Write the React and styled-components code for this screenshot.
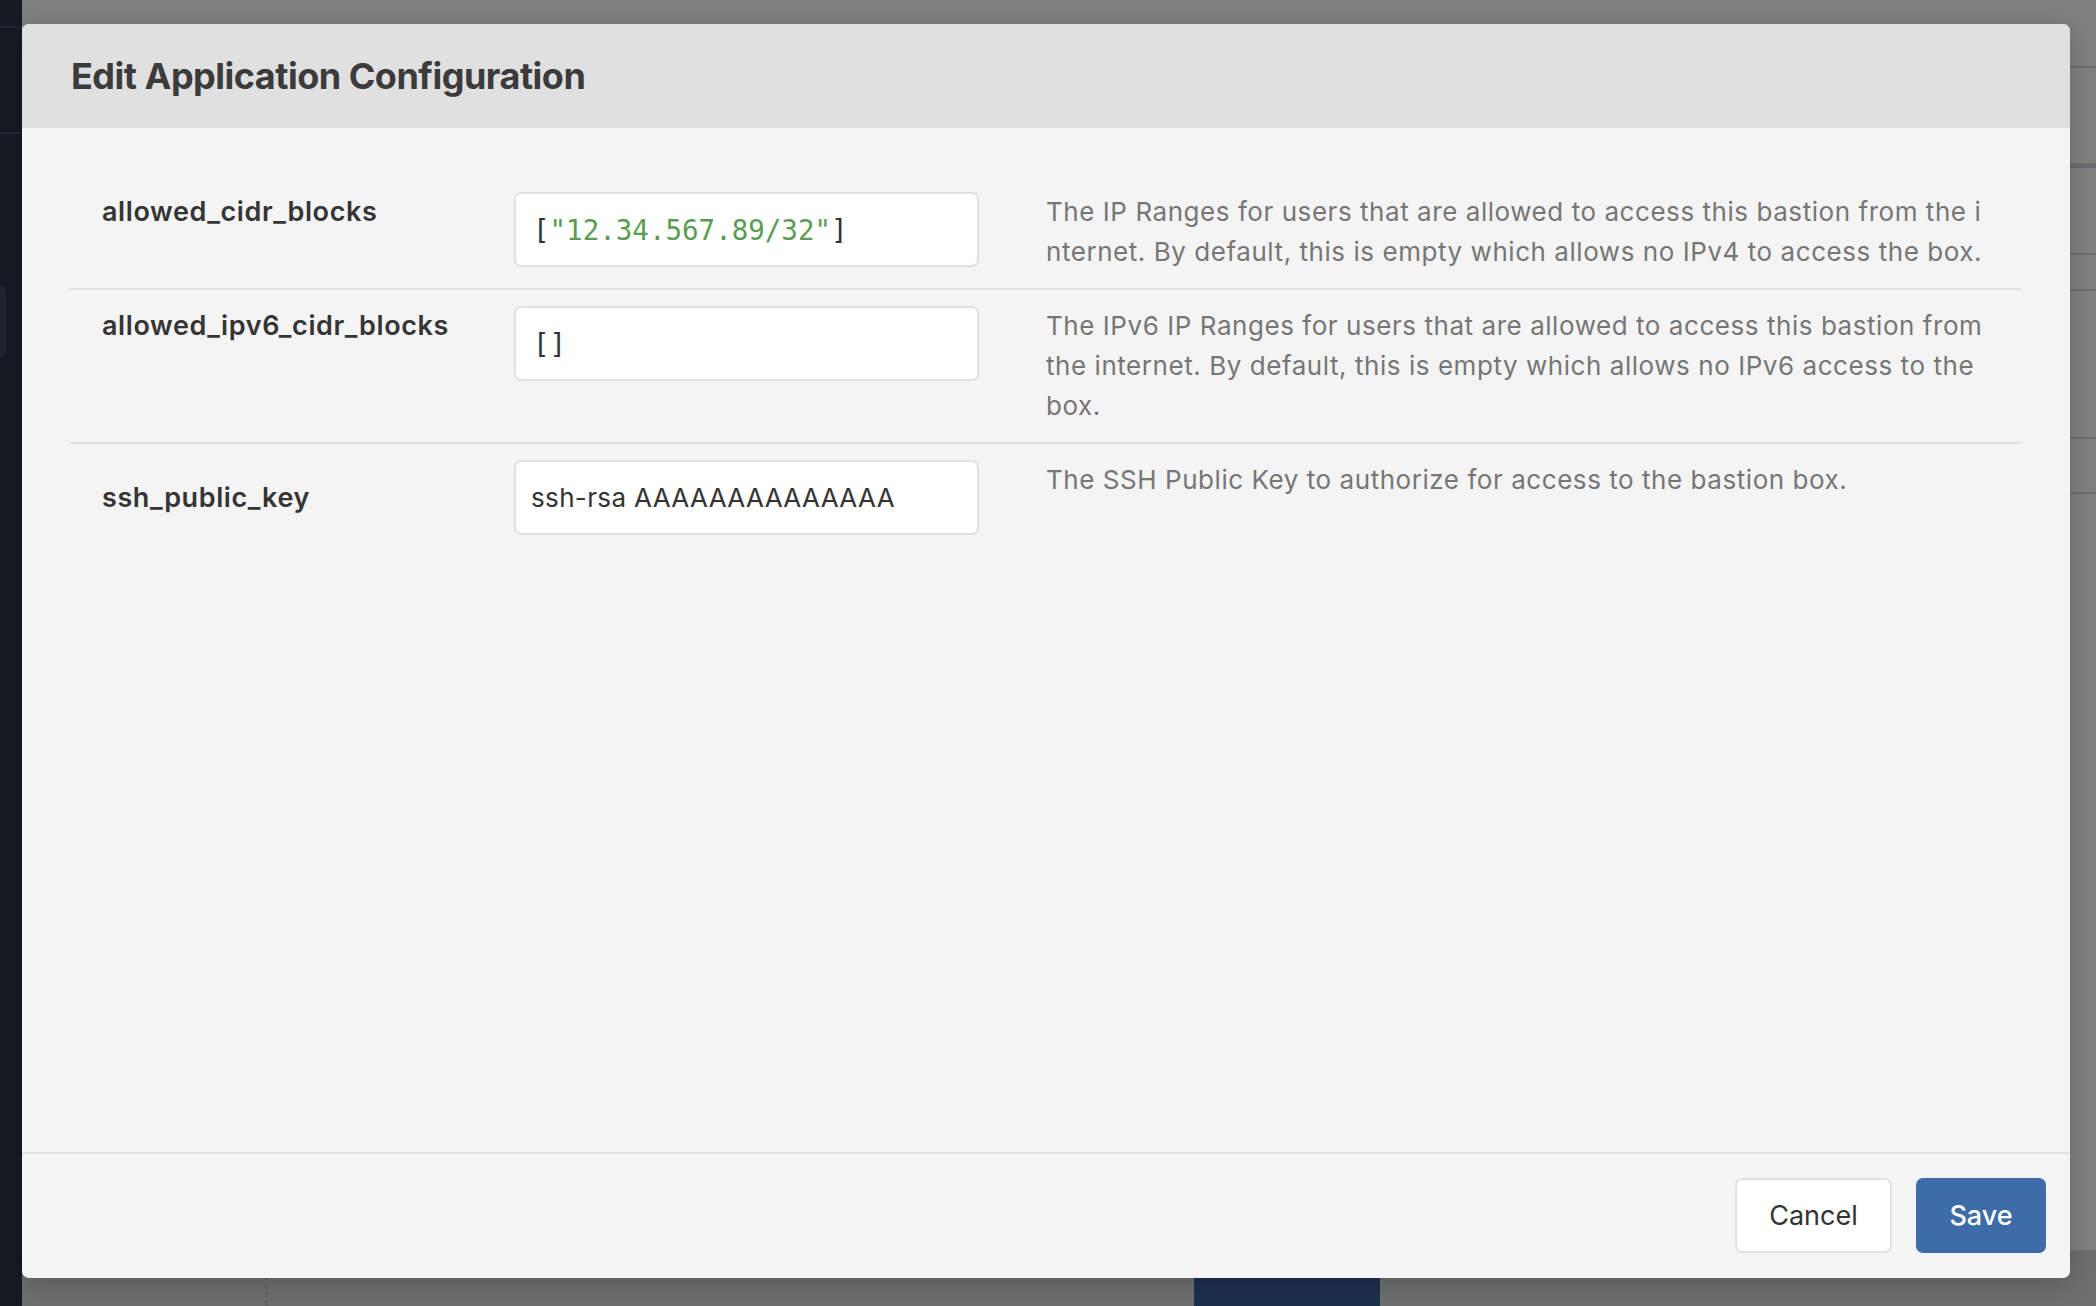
import React from "react";
import styled, { createGlobalStyle } from "styled-components";

const GlobalStyle = createGlobalStyle`
  html, body {
    margin: 0;
    padding: 0;
  }
  body {
    font-family: Inter, "Noto Sans", sans-serif;
    -webkit-font-smoothing: antialiased;
  }
`;

const Page = styled.div`
  display: flex;
  width: 2096px;
  height: 1306px;
  overflow: hidden;
`;

const Sidebar = styled.aside`
  width: 22px;
  flex-shrink: 0;
  background: #151a23;
  display: flex;
  flex-direction: column;
`;

const SideBlock = styled.div`
  height: ${(p) => p.h}px;
  border-bottom: ${(p) => (p.line ? "2px solid #222833" : "none")};
`;

const SideItem = styled.div`
  height: 72px;
  width: 6px;
  border-radius: 0 8px 8px 0;
  background: #1f2530;
`;

const Main = styled.main`
  position: relative;
  flex: 1;
  display: flex;
  flex-direction: column;
  background: #ffffff;
`;

const Band = styled.div`
  height: ${(p) => p.h}px;
  flex-shrink: 0;
  border-bottom: ${(p) => p.border || "2px solid #dcdcdc"};
`;

const Spacer = styled.div`
  flex: 1;
`;

const BottomBar = styled.div`
  height: 56px;
  display: flex;
  background: #dcdcdc;
  padding-top: 17px;
  box-sizing: border-box;
`;

const Dashed = styled.div`
  width: 243px;
  border-right: 3px dashed #c8c8c8;
  margin-top: -17px;
`;

const NavyButton = styled.div`
  margin-left: 926px;
  width: 186px;
  height: 60px;
  border-radius: 12px;
  background: #385e9a;
`;

const Overlay = styled.div`
  position: absolute;
  inset: 0;
  background: rgba(0, 0, 0, 0.5);
  display: flex;
  padding: 24px 26px 28px 0;
`;

const Modal = styled.div`
  flex: 1;
  display: flex;
  flex-direction: column;
  background: #f4f4f4;
  border-radius: 7px;
  overflow: hidden;
  box-shadow: 0 6px 24px rgba(0, 0, 0, 0.18);
`;

const Header = styled.header`
  height: 104px;
  flex-shrink: 0;
  display: flex;
  align-items: center;
  padding-left: 49px;
  background: #e0e0e0;
`;

const Title = styled.h2`
  margin: 0;
  font-size: 36px;
  font-weight: 700;
  color: #3b3b3b;
  letter-spacing: -0.5px;
`;

const Body = styled.div`
  flex: 1;
  padding: 48px 49px 0 48px;
`;

const Row = styled.div`
  display: grid;
  grid-template-columns: 412px 465px 1fr;
  padding: 16px 32px;
  border-bottom: ${(p) => (p.last ? "none" : "2px solid #e1e1e1")};
`;

const Label = styled.div`
  align-self: ${(p) => (p.centered ? "center" : "start")};
  font-size: 27px;
  line-height: 40px;
  font-weight: 600;
  letter-spacing: 0.6px;
  color: #353535;
`;

const Input = styled.div`
  height: 75px;
  box-sizing: border-box;
  display: flex;
  align-items: center;
  padding: 0 15px;
  background: #ffffff;
  border: 2px solid #e1e1e1;
  border-radius: 7px;
  font-size: 26px;
  letter-spacing: 0.35px;
  color: #333333;
  font-family: inherit;
`;

const Code = styled.span`
  font-family: "DejaVu Sans Mono", "Liberation Mono", monospace;
  font-size: 27.5px;
  letter-spacing: 0;
  padding-left: 2px;
`;

const Str = styled.span`
  color: #5b9c54;
`;

const Description = styled.div`
  padding-left: 67px;
  font-size: 26px;
  line-height: 40px;
  letter-spacing: 0.55px;
  color: #767676;
`;

const Line = styled.span`
  display: block;
  white-space: nowrap;
`;

const Footer = styled.footer`
  display: flex;
  justify-content: flex-end;
  gap: 24px;
  padding: 24px 24px 25px;
  border-top: 2px solid #e1e1e1;
`;

const Button = styled.button`
  height: 75px;
  width: ${(p) => p.w}px;
  box-sizing: border-box;
  border-radius: 7px;
  font-family: inherit;
  font-size: 27px;
  font-weight: ${(p) => (p.primary ? 500 : 400)};
  cursor: pointer;
  color: ${(p) => (p.primary ? "#ffffff" : "#333333")};
  background: ${(p) => (p.primary ? "#3d6ca8" : "#ffffff")};
  border: ${(p) => (p.primary ? "none" : "2px solid #e1e1e1")};
`;

const fields = [
  {
    name: "allowed_cidr_blocks",
    value: (
      <Code>
        [<Str>"12.34.567.89/32"</Str>]
      </Code>
    ),
    lines: [
      "The IP Ranges for users that are allowed to access this bastion from the i",
      "nternet. By default, this is empty which allows no IPv4 to access the box.",
    ],
  },
  {
    name: "allowed_ipv6_cidr_blocks",
    value: <Code>[]</Code>,
    lines: [
      "The IPv6 IP Ranges for users that are allowed to access this bastion from",
      "the internet. By default, this is empty which allows no IPv6 access to the",
      "box.",
    ],
  },
  {
    name: "ssh_public_key",
    value: "ssh-rsa AAAAAAAAAAAAAA",
    centered: true,
    lines: ["The SSH Public Key to authorize for access to the bastion box."],
  },
];

const App = () => {
  return (
    <>
      <GlobalStyle />
      <Page>
        <Sidebar>
          <SideBlock h={26} line />
          <SideBlock h={104} line />
          <SideBlock h={151} />
          <SideItem />
        </Sidebar>
        <Main>
          <Band h={66} />
          <Band h={95} border="5px solid #d4d8de" />
          <Band h={85} />
          <Band h={34} />
          <Band h={146} />
          <Band h={53} />
          <Spacer />
          <BottomBar>
            <Dashed />
            <NavyButton />
          </BottomBar>

          <Overlay>
            <Modal>
              <Header>
                <Title>Edit Application Configuration</Title>
              </Header>
              <Body>
                {fields.map((f, i) => (
                  <Row key={f.name} last={i === fields.length - 1}>
                    <Label centered={f.centered}>{f.name}</Label>
                    <Input>{f.value}</Input>
                    <Description>
                      {f.lines.map((l) => (
                        <Line key={l}>{l}</Line>
                      ))}
                    </Description>
                  </Row>
                ))}
              </Body>
              <Footer>
                <Button w={157}>Cancel</Button>
                <Button w={130} primary>
                  Save
                </Button>
              </Footer>
            </Modal>
          </Overlay>
        </Main>
      </Page>
    </>
  );
};

export default App;
